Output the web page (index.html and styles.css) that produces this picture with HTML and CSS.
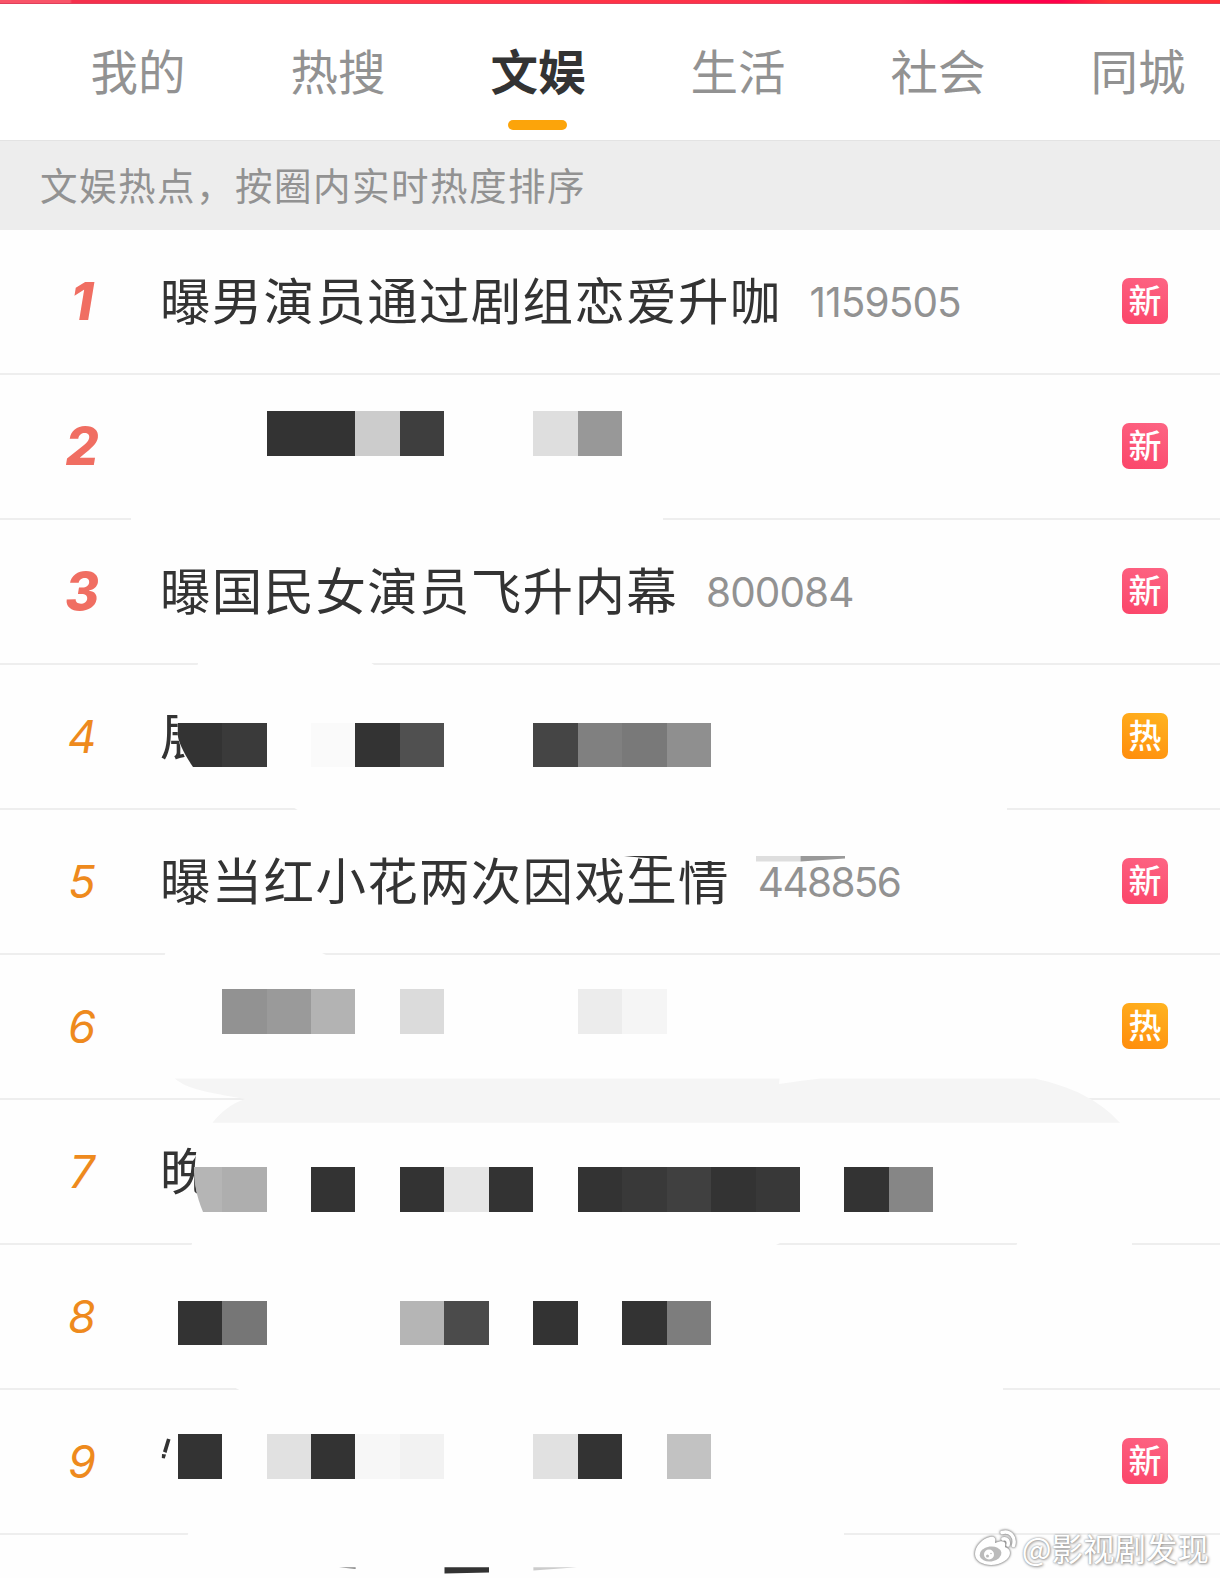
FILE: index.html
```html
<!DOCTYPE html>
<html lang="zh-CN">
<head>
    <meta charset="UTF-8">
    <meta name="viewport" content="width=device-width, initial-scale=1.0">
    <title>文娱热点</title>
    <link rel="stylesheet" href="styles.css">
</head>
<body>
    <div class="page">
        <div class="banner"></div>

        <nav class="tabs">
            <a class="tab">我的</a>
            <a class="tab">热搜</a>
            <a class="tab active">文娱</a>
            <a class="tab">生活</a>
            <a class="tab">社会</a>
            <a class="tab">同城</a>
        </nav>

        <div class="notice">文娱热点，按圈内实时热度排序</div>

        <ul class="list">
            <li class="row"><span class="rank top">1</span><span class="title">曝男演员通过剧组恋爱升咖</span><span class="count">1159505</span><span class="badge new">新</span></li>
            <li class="row"><span class="rank top">2</span><span class="badge new">新</span></li>
            <li class="row"><span class="rank top">3</span><span class="title">曝国民女演员飞升内幕</span><span class="count">800084</span><span class="badge new">新</span></li>
            <li class="row"><span class="rank">4</span><span class="title">展</span><span class="badge hot">热</span></li>
            <li class="row"><span class="rank">5</span><span class="title">曝当红小花两次因戏生情</span><span class="count narrow">448856</span><span class="badge new">新</span></li>
            <li class="row"><span class="rank">6</span><span class="badge hot">热</span></li>
            <li class="row"><span class="rank">7</span><span class="title">晚</span></li>
            <li class="row"><span class="rank">8</span></li>
            <li class="row"><span class="rank">9</span><span class="badge new">新</span></li>
        </ul>

        <!-- mosaico sobre los títulos -->
        <svg class="mosaic" viewBox="0 0 1220 1578" width="1220" height="1578">
            <g fill="#fefefe">
                <path d="M131 515H663V522H131Z"/>
                <path d="M199 660H367L377 667H197Z"/>
                <path d="M291 806L301 812H1007V805H291Z"/>
                <path d="M166 951H318L330 957H164Z"/>
                <path d="M193 1240H786L772 1247H191Z"/>
                <path d="M1018 1240H1132V1247H1016Z"/>
                <path d="M232 1386L243 1392H1003V1384H232Z"/>
                <path d="M189 1530H844V1538H187Z"/>
                <path d="M177 700H240V780H198C186 762 179 746 177.800 735Z"/>
                <path d="M196.500 1135H240V1225H208C196 1196 192 1180 196.500 1150Z"/>
                <path d="M620 845H740V861H690L667 858L624 856Z"/>
            </g>

            <path fill="#f5f5f5" d="M174.800 1078.500C187 1089 206 1092 245 1099C231 1104 221 1112 212.500 1122.700H1120C1098 1099 1072 1087 1035 1078.500H821C806 1080 794 1082 779 1084L779.500 1078.500Z"/>

            <g class="blocks">
                <!-- 2 -->
                <rect x="266.700" y="411.400" width="88.700" height="44.500" fill="#333"/>
                <rect x="355.400" y="411.400" width="44.500" height="44.500" fill="#ccc"/>
                <rect x="399.900" y="411.400" width="44.500" height="44.500" fill="#3e3e3e"/>
                <rect x="533.400" y="411.400" width="44.500" height="44.500" fill="#dedede"/>
                <rect x="577.900" y="411.400" width="44.400" height="44.500" fill="#989898"/>

                <!-- 4 -->
                <rect x="222.300" y="722.700" width="44.500" height="44.700" fill="#3a3a3a"/>
                <rect x="311.200" y="722.700" width="44.200" height="44.700" fill="#fafafa"/>
                <rect x="355.400" y="722.700" width="44.500" height="44.700" fill="#333"/>
                <rect x="400" y="722.700" width="44.400" height="44.700" fill="#505050"/>
                <rect x="533.400" y="722.700" width="44.500" height="44.700" fill="#454545"/>
                <rect x="577.900" y="722.700" width="44.500" height="44.700" fill="#808080"/>
                <rect x="622.300" y="722.700" width="44.500" height="44.700" fill="#797979"/>
                <rect x="666.800" y="722.700" width="44.400" height="44.700" fill="#8f8f8f"/>

                <!-- 6 -->
                <rect x="222.300" y="989.400" width="44.500" height="44.500" fill="#929292"/>
                <rect x="266.700" y="989.400" width="44.500" height="44.500" fill="#9a9a9a"/>
                <rect x="311.200" y="989.400" width="44.200" height="44.500" fill="#b3b3b3"/>
                <rect x="400" y="989.400" width="44.400" height="44.500" fill="#dbdbdb"/>
                <rect x="577.900" y="989.400" width="44.500" height="44.500" fill="#ececec"/>
                <rect x="622.300" y="989.400" width="44.500" height="44.500" fill="#f5f5f5"/>

                <!-- 7 -->
                <rect x="222.300" y="1167.300" width="44.500" height="44.700" fill="#aeaeae"/>
                <rect x="311.200" y="1167.300" width="44.200" height="44.700" fill="#333"/>
                <rect x="400" y="1167.300" width="44.400" height="44.700" fill="#333"/>
                <rect x="444.400" y="1167.300" width="44.600" height="44.700" fill="#e6e6e6"/>
                <rect x="489" y="1167.300" width="44.400" height="44.700" fill="#333"/>
                <rect x="577.900" y="1167.300" width="44.500" height="44.700" fill="#333"/>
                <rect x="622.300" y="1167.300" width="44.500" height="44.700" fill="#393939"/>
                <rect x="666.800" y="1167.300" width="44.500" height="44.700" fill="#404040"/>
                <rect x="711.200" y="1167.300" width="44.500" height="44.700" fill="#333"/>
                <rect x="755.700" y="1167.300" width="44.500" height="44.700" fill="#383838"/>
                <rect x="844.400" y="1167.300" width="44.600" height="44.700" fill="#333"/>
                <rect x="889" y="1167.300" width="44.400" height="44.700" fill="#868686"/>

                <!-- 8 -->
                <rect x="177.800" y="1300.700" width="44.500" height="44.700" fill="#333"/>
                <rect x="222.300" y="1300.700" width="44.500" height="44.700" fill="#767676"/>
                <rect x="400" y="1300.700" width="44.400" height="44.700" fill="#b5b5b5"/>
                <rect x="444.400" y="1300.700" width="44.600" height="44.700" fill="#4b4b4b"/>
                <rect x="533.400" y="1300.700" width="44.500" height="44.700" fill="#333"/>
                <rect x="622.300" y="1300.700" width="44.500" height="44.700" fill="#333"/>
                <rect x="666.800" y="1300.700" width="44.400" height="44.700" fill="#7d7d7d"/>

                <!-- 9 -->
                <rect x="177.800" y="1434.300" width="44.500" height="44.500" fill="#333"/>
                <rect x="266.700" y="1434.300" width="44.500" height="44.500" fill="#e1e1e1"/>
                <rect x="311.200" y="1434.300" width="44.200" height="44.500" fill="#333"/>
                <rect x="355.400" y="1434.300" width="44.600" height="44.500" fill="#f7f7f7"/>
                <rect x="400" y="1434.300" width="44.400" height="44.500" fill="#f2f2f2"/>
                <rect x="533.400" y="1434.300" width="44.500" height="44.500" fill="#e1e1e1"/>
                <rect x="577.900" y="1434.300" width="44.500" height="44.500" fill="#333"/>
                <rect x="666.800" y="1434.300" width="44.400" height="44.500" fill="#c2c2c2"/>
            </g>

            <!-- bloques con borde curvo y restos sueltos -->
            <path d="M177.800 723H222V767H193C184 754 178 741 177.800 735Z" fill="#333"/>
            <path d="M194 1167H222V1212H203C196 1195 194 1182 194 1167Z" fill="#b5b5b5"/>
            <path d="M624 856H666.800V859.500L640 857.500Z" fill="#333"/>
            <rect x="756" y="856" width="44.500" height="5.500" fill="#dedede"/>
            <path d="M800.500 856H845V858.500L800.500 861.500Z" fill="#999"/>
            <path d="M167 1438.500L170.500 1439.500L166.500 1453L163 1451.500ZM162 1454L166 1454.500L164.800 1458.500L161.800 1458Z" fill="#333"/>
            <path d="M339 1567.300H355.600V1569Z" fill="#888"/>
            <path d="M444.500 1567.300H489V1572.500L444.500 1573.500Z" fill="#333"/>
            <path d="M533.400 1567.300H577L533.400 1570.500Z" fill="#ccc"/>
        </svg>

        <div class="watermark">
            <svg class="weibo" viewBox="0 0 44 38" width="44" height="38">
                <path class="body" d="M17 8C10 9 2 17 2 25C2 32 10 36 18 36C28 36 37 30 37 24C37 20 34 19 32 18C33 14 32 10 22 14C23 10 22 7 17 8Z"/>
                <ellipse class="eye" cx="17.500" cy="25" rx="11" ry="7.500" transform="rotate(-8 17.5 25)"/>
                <circle class="pupil" cx="16" cy="25.500" r="5"/>
                <circle class="eye" cx="14.500" cy="27" r="1.500"/>
                <circle class="eye" cx="18" cy="24.500" r=".8"/>
                <path class="wave" d="M30 10C34 9 36 12 35 16M29 3.500C37 1 43 8 40.500 16.500"/>
            </svg>
            <span>@影视剧发现</span>
        </div>
    </div>
</body>
</html>
```

FILE: styles.css
```css
* { box-sizing: border-box; }
body { margin: 0; background: #fefefe; font-family: "Noto Sans CJK SC", sans-serif; color: #333; }
.page { position: relative; width: 1220px; height: 1578px; overflow: hidden; }
.banner {
    height: 4px;
    background: linear-gradient(90deg, #f95468 0, #f95468 70px, #f5304c 72px, #f5304c 170px, #ff3a4a 220px, #ff3346 620px, #f92f52 900px, #ff004c 970px, #ff004c 1060px, #ff3535 1110px, #ff2d35);
    border-bottom: 1px solid #e0405c;
}
.tabs {
    display: flex;
    height: 137px;
    padding-left: 38px;
    background: #fff;
    border-bottom: 1px solid #e3e3e3;
}
.tab {
    display: flex;
    flex: 0 0 200px;
    flex-direction: column;
    align-items: center;
    padding-top: 31px;
    font-size: 47.5px;
    line-height: 70px;
    color: #929292;
}
.tab.active { color: #333; font-weight: 700; }
.tab.active::after {
    content: "";
    width: 59px;
    height: 10px;
    margin-top: 15px;
    margin-right: 2px;
    border-radius: 5px;
    background: #fca40a;
}
.notice {
    height: 89px;
    padding-left: 40px;
    background: #ededed;
    color: #929292;
    font-size: 37.5px;
    line-height: 86px;
    letter-spacing: 1.5px;
}
.list { margin: 0; padding: 0; list-style: none; }
.row {
    display: flex;
    align-items: center;
    height: 145px;
    padding-right: 52px;
    border-bottom: 2px solid #eee;
}
.rank {
    flex: none;
    width: 160px;
    padding-left: 4px;
    text-align: center;
    font-family: Inter, sans-serif;
    font-style: italic;
    font-size: 45px;
    line-height: 60px;
    color: #ee8a1d;
}
.rank.top { font-size: 52px; font-weight: 800; color: #f06e62; }
.title {
    margin-top: -8px;
    font-size: 50.5px;
    line-height: 70px;
    letter-spacing: 1.3px;
    white-space: nowrap;
}
.count {
    margin-top: 1px;
    margin-left: 28px;
    font-family: Inter, sans-serif;
    font-size: 40.5px;
    font-weight: 400;
    letter-spacing: -0.9px;
    color: #929292;
}
.count.narrow { letter-spacing: -1.6px; }
.badge {
    width: 46px;
    height: 46px;
    margin-top: -2px;
    margin-left: auto;
    border-radius: 7px;
    color: #fff;
    font-size: 33px;
    font-weight: 500;
    line-height: 43px;
    text-align: center;
}
.badge.new { background: linear-gradient(20deg, #fb4569, #fd6584); }
.badge.hot { background: linear-gradient(20deg, #ff8c0c, #ffb420); }
.mosaic { position: absolute; top: 0; left: 0; }
.blocks { shape-rendering: crispEdges; }
.watermark {
    position: absolute;
    right: 11px;
    bottom: 11px;
    display: flex;
    align-items: center;
    gap: 4px;
    font-size: 31.5px;
    line-height: 40px;
    color: #fff;
    text-shadow: 0 0 2px #888, 1px 1px 3px #999;
}
.weibo { margin-top: 2px; margin-right: 1px; filter: drop-shadow(0 0 1px #777) drop-shadow(0 0 1px #aaa); }
.weibo .body, .weibo .pupil { fill: #fff; }
.weibo .eye { fill: #bbb; }
.weibo .wave { fill: none; stroke: #fff; stroke-width: 3.5; stroke-linecap: round; }
```
